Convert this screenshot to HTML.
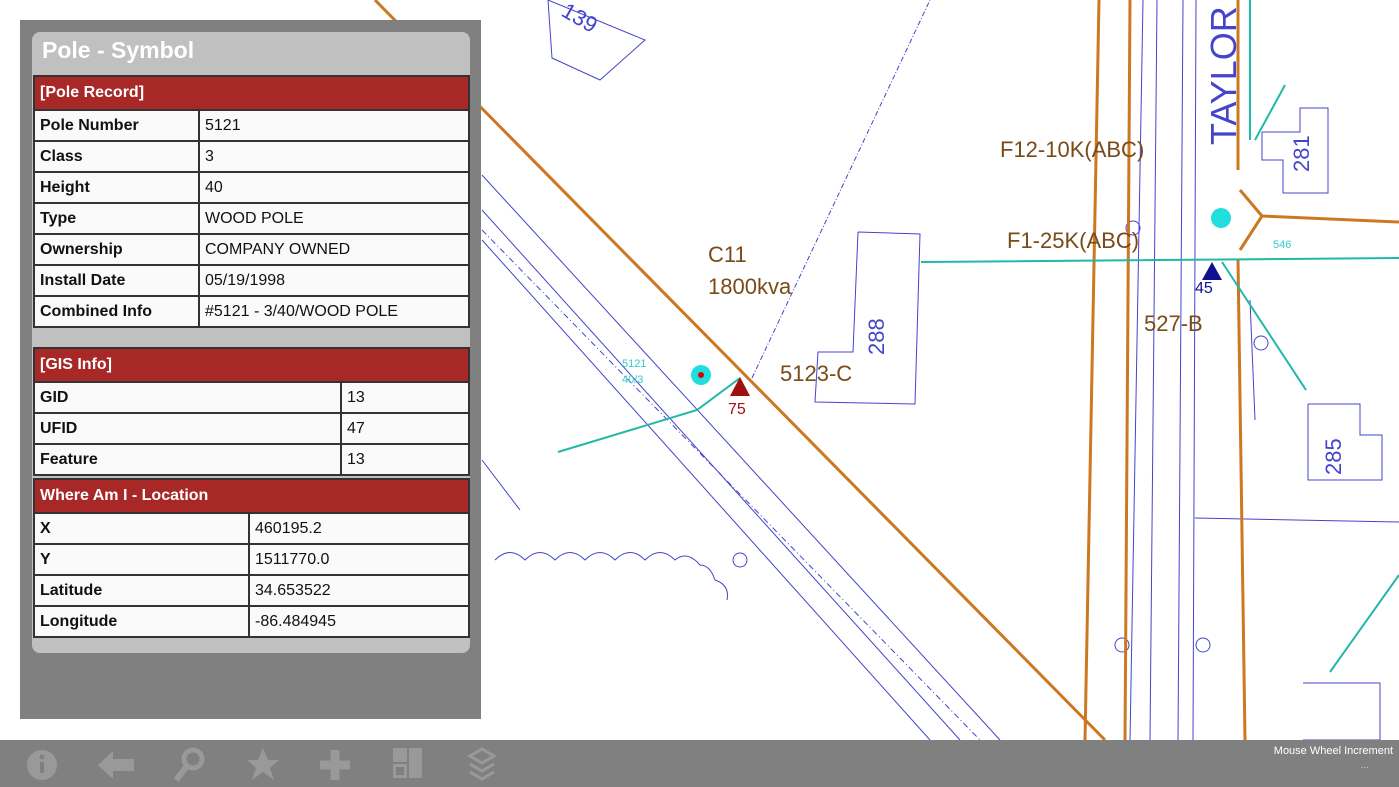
<!DOCTYPE html>
<html><head><meta charset="utf-8"><style>
body{margin:0;width:1399px;height:787px;overflow:hidden;background:#fff;position:relative;font-family:"Liberation Sans",Arial,sans-serif}
#map{position:absolute;left:0;top:0}
#outer{position:absolute;left:20px;top:20px;width:461px;height:699px;background:#808080}
#inner{position:absolute;left:12px;top:12px;width:438px;height:621px;background:#c0c0c0;border-radius:8px}
#title{position:absolute;left:10px;top:5px;color:#fff;font-weight:bold;font-size:23px}
table{position:absolute;left:1px;width:437px;border-collapse:collapse}
td{border:2px solid #333;background:#fafafa;font-size:16px;height:29px;padding:0 0 0 5px;color:#111}
td.k{font-weight:bold}
td.h{background:#a82828;color:#fff;font-weight:bold;height:32px}
#bar{position:absolute;left:0;top:740px;width:1399px;height:47px;background:#808080}
</style></head><body>
<svg id="map" width="1399" height="740" viewBox="0 0 1399 740">
<g fill="none" stroke="#4444cc" stroke-width="1">
<polyline points="548,0 645,40 600,80 552,58 548,0"/>
<path d="M482,175 L1000,740 M482,210 L960,740 M482,240 L930,740 M482,460 L520,510"/>
<path d="M482,230 L980,740" stroke-dasharray="6,3,1,3"/>
<polyline points="858,232 920,234 915,404 815,402 818,352 853,352 858,232"/>
<polyline points="1262,132 1300,132 1300,108 1328,108 1328,193 1283,193 1283,160 1262,160 1262,132"/>
<polyline points="1308,404 1360,404 1360,435 1382,435 1382,480 1308,480 1308,404"/>
<polyline points="1303,683 1380,683 1380,740 1303,740"/>
<path d="M1143,0 L1130,740 M1157,0 L1150,740 M1183,0 L1178,740 M1196,0 L1193,740 M1250,300 L1255,420 M1195,518 L1399,522"/>
<path d="M752,378 L930,0" stroke-dasharray="5,2,1,2"/>
<path d="M495,560 q15,-15 30,0 q15,-15 30,0 q15,-15 30,0 q15,-15 30,0 q15,-15 30,0 q15,-15 30,0 q12,-10 25,5 q10,0 15,15 q15,5 12,20"/>
<circle cx="740" cy="560" r="7"/><circle cx="1122" cy="645" r="7"/><circle cx="1203" cy="645" r="7"/><circle cx="1261" cy="343" r="7"/><circle cx="1133" cy="228" r="7"/>
</g>
<g fill="none" stroke="#cc7722" stroke-width="3">
<path d="M375,0 L1105,740 M1099,0 L1085,740 M1130,0 L1125,740 M1238,0 L1238,170 M1238,260 L1245,740 M1240,190 L1262,216 L1399,222 M1240,250 L1262,216"/>
</g>
<g fill="none" stroke="#22b8a8" stroke-width="2">
<path d="M921,262 L1399,258 M558,452 L697,410 L740,378 M1222,262 L1306,390 M1255,140 L1285,85 M1250,0 L1250,140 M1330,672 L1399,575"/>
</g>
<circle cx="701" cy="375" r="10" fill="#22dddd"/><circle cx="701" cy="375" r="3" fill="#d00"/>
<circle cx="1221" cy="218" r="10" fill="#22dddd"/>
<polygon points="740,377 730,396 750,396" fill="#a01010"/>
<polygon points="1212,262 1202,280 1222,280" fill="#101090"/>
<g font-family="Liberation Sans,sans-serif">
<text x="708" y="262" font-size="22" fill="#7a4a18">C11</text>
<text x="708" y="294" font-size="22" fill="#7a4a18">1800kva</text>
<text x="780" y="381" font-size="22" fill="#7a4a18">5123-C</text>
<text x="1000" y="157" font-size="22" fill="#7a4a18">F12-10K(ABC)</text>
<text x="1007" y="248" font-size="22" fill="#7a4a18">F1-25K(ABC)</text>
<text x="1144" y="331" font-size="22" fill="#7a4a18">527-B</text>
<text x="728" y="414" font-size="16" fill="#a01010">75</text>
<text x="1195" y="293" font-size="16" fill="#101090">45</text>
<text x="622" y="367" font-size="11" fill="#33cccc">5121</text>
<text x="622" y="383" font-size="11" fill="#33cccc">40/3</text>
<text x="1273" y="248" font-size="11" fill="#33cccc">546</text>
<text font-size="22" fill="#4444cc" transform="translate(884,355) rotate(-90)">288</text>
<text font-size="22" fill="#4444cc" transform="translate(1309,172) rotate(-90)">281</text>
<text font-size="22" fill="#4444cc" transform="translate(1341,475) rotate(-90)">285</text>
<text font-size="22" fill="#4444cc" transform="translate(560,15) rotate(30)">139</text>
<text font-size="36" fill="#4444cc" transform="translate(1236,145) rotate(-90)">TAYLOR</text>
</g>
</svg>
<div id="outer"><div id="inner">
<div id="title">Pole - Symbol</div>
<table style="top:43px">
<tr><td class="h" colspan="2">[Pole Record]</td></tr>
<tr><td class="k" style="width:158px">Pole Number</td><td>5121</td></tr>
<tr><td class="k">Class</td><td>3</td></tr>
<tr><td class="k">Height</td><td>40</td></tr>
<tr><td class="k">Type</td><td>WOOD POLE</td></tr>
<tr><td class="k">Ownership</td><td>COMPANY OWNED</td></tr>
<tr><td class="k">Install Date</td><td>05/19/1998</td></tr>
<tr><td class="k">Combined Info</td><td>#5121 - 3/40/WOOD POLE</td></tr>
</table>
<table style="top:315px">
<tr><td class="h" colspan="2">[GIS Info]</td></tr>
<tr><td class="k" style="width:300px">GID</td><td>13</td></tr>
<tr><td class="k">UFID</td><td>47</td></tr>
<tr><td class="k">Feature</td><td>13</td></tr>
</table>
<table style="top:446px">
<tr><td class="h" colspan="2">Where Am I - Location</td></tr>
<tr><td class="k" style="width:208px">X</td><td>460195.2</td></tr>
<tr><td class="k">Y</td><td>1511770.0</td></tr>
<tr><td class="k">Latitude</td><td>34.653522</td></tr>
<tr><td class="k">Longitude</td><td>-86.484945</td></tr>
</table>
</div></div>
<div id="bar">
<svg width="560" height="47" style="position:absolute;left:0;top:0" fill="#999" stroke="#999">
<circle cx="42" cy="25" r="15" stroke="none"/><rect x="40" y="22" width="4" height="11" fill="#808080" stroke="none"/><circle cx="42" cy="17" r="2.5" fill="#808080" stroke="none"/>
<path d="M98,25 L113,11 L113,19 L134,19 L134,31 L113,31 L113,39 Z" stroke="none"/>
<circle cx="193" cy="19" r="9" fill="none" stroke-width="5"/><path d="M187,26 L176,40" stroke-width="6"/>
<path d="M263,8 L268,20 L279,20 L270,28 L274,40 L263,32 L252,40 L256,28 L247,20 L258,20 Z" stroke="none"/>
<path d="M335,10 L335,40 M320,25 L350,25" stroke-width="9"/>
<rect x="393" y="8" width="14" height="14" stroke="none"/><rect x="409" y="8" width="13" height="30" stroke="none"/><rect x="393" y="24" width="14" height="14" stroke="none"/><rect x="396" y="27" width="8" height="8" fill="#808080" stroke="none"/>
<path d="M470,16 L482,9 L494,16 L482,23 Z M470,24 L482,31 L494,24 M470,32 L482,39 L494,32" stroke-width="3" fill="none"/>
</svg>
<div style="position:absolute;right:6px;top:5px;color:#fff;font-size:11px">Mouse Wheel Increment</div>
<div style="position:absolute;right:30px;top:20px;color:#ccc;font-size:10px">...</div>
</div>
</body></html>
